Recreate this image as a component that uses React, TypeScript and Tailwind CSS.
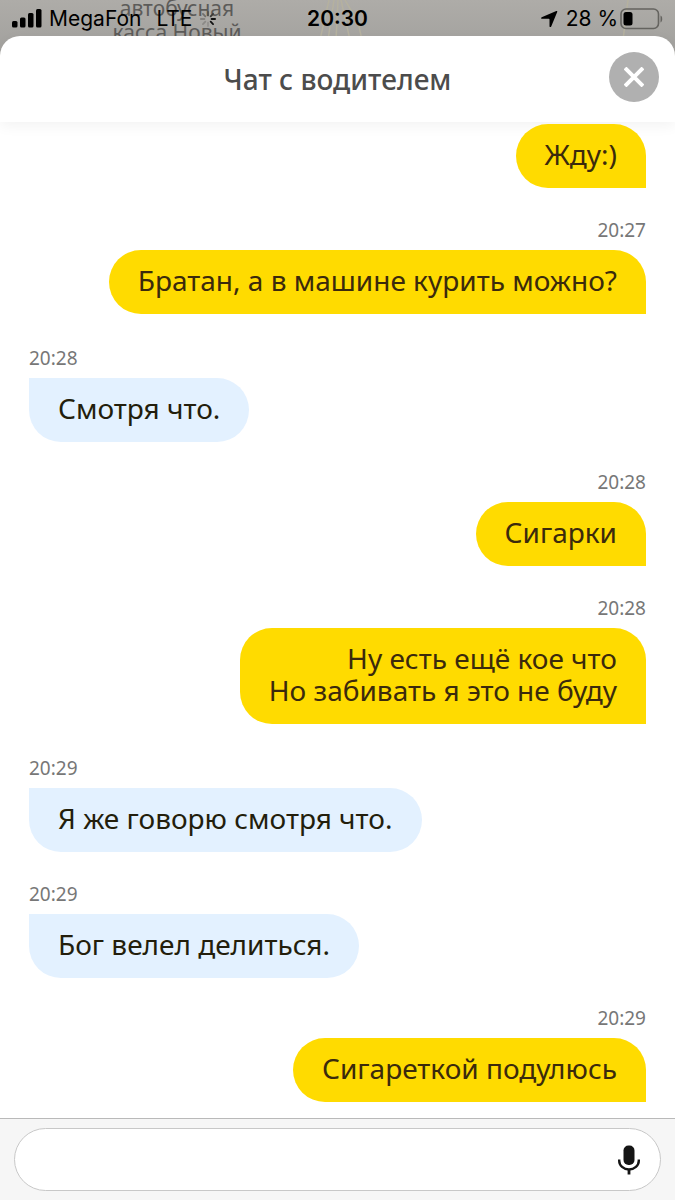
import React from "react";

type Message = { id: number; from: "me" | "driver"; time?: string; lines: string[] };

const messages: Message[] = [
  { id: 1, from: "me", lines: ["Жду:)"] },
  { id: 2, from: "me", time: "20:27", lines: ["Братан, а в машине курить можно?"] },
  { id: 3, from: "driver", time: "20:28", lines: ["Смотря что."] },
  { id: 4, from: "me", time: "20:28", lines: ["Сигарки"] },
  { id: 5, from: "me", time: "20:28", lines: ["Ну есть ещё кое что", "Но забивать я это не буду"] },
  { id: 6, from: "driver", time: "20:29", lines: ["Я же говорю смотря что."] },
  { id: 7, from: "driver", time: "20:29", lines: ["Бог велел делиться."] },
  { id: 8, from: "me", time: "20:29", lines: ["Сигареткой подулюсь"] },
];

function MapBackdrop() {
  return (
    <div aria-hidden="true" className="absolute inset-0 overflow-hidden bg-linear-to-b from-[#aeaca8] to-[#9f9e9b]">
      <svg className="absolute left-[316px] top-0 h-10 w-12" viewBox="0 0 48 40" fill="none" stroke="#b5b19f" strokeWidth="1.500">
        <path d="M13 0 4 40M18 0 12 40M22 0 20 40M29 0 42 22 46 40M25 0 34 40" />
      </svg>
      <svg className="absolute right-[44px] top-0 h-10 w-3" viewBox="0 0 12 40" fill="none" stroke="#b5b19f" strokeWidth="1.500">
        <path d="M9 0 4 40" />
      </svg>
      <p className="absolute left-[102px] -top-1 w-[150px] text-center text-[21px] leading-6 text-[#5c5b59]">
        автобусная
        <br />
        касса Новый
      </p>
    </div>
  );
}

function StatusBar() {
  return (
    <div className="relative grid h-9 grid-cols-[1fr_auto_1fr] items-center px-3 pt-0.5 font-['Inter','Liberation_Sans',sans-serif] text-[21px] leading-6 text-black">
      <div className="flex items-center gap-[7px]">
        <svg className="h-5 w-[30px]" viewBox="0 0 30 20" fill="currentColor">
          <rect x="0" y="12" width="5.500" height="6.500" rx="1.500" />
          <rect x="8" y="8.500" width="5.500" height="10" rx="1.500" />
          <rect x="16" y="4" width="5.500" height="14.500" rx="1.500" />
          <rect x="24" y="0" width="5.500" height="18.500" rx="1.500" />
        </svg>
        <span>MegaFon</span>
        <span className="pl-2">LTE</span>
        <svg className="h-4 w-4" viewBox="0 0 18 18" fill="none" strokeWidth="2" strokeLinecap="round">
          <path d="M9 1v4" stroke="#55534f" />
          <path d="M14.700 3.300 12 6" stroke="#3a3937" />
          <path d="M17 9h-4" stroke="#111" />
          <path d="M14.700 14.700 12 12" stroke="#111" />
          <path d="M9 17v-4" stroke="#92908d" />
          <path d="M3.300 14.700 6 12" stroke="#8b8986" />
          <path d="M1 9h4" stroke="#83817e" />
          <path d="M3.300 3.300 6 6" stroke="#706e6b" />
        </svg>
      </div>
      <span className="font-semibold">20:30</span>
      <div className="flex items-center justify-end">
        <svg className="mr-2 h-[18px] w-[18px]" viewBox="0 0 18 18" fill="currentColor">
          <path d="M16.300 1.100c.7-.3 1.200.2.900.900L11.200 16.500c-.4.900-1.700.7-1.700-.3V9.500c0-.5-.2-.7-.7-.7H2C1 8.800.8 7.600 1.700 7.200z" />
        </svg>
        <span className="mr-0.5">28 %</span>
        <svg className="h-[22px] w-[43px]" viewBox="0 0 43 22" fill="none">
          <rect x="1" y="1" width="37.500" height="19.500" rx="5" stroke="#64635f" strokeWidth="1.600" />
          <rect x="3.500" y="4" width="9" height="13.500" rx="2.500" fill="#000" />
          <path d="M40.500 7.500c2.300.8 2.300 6 0 7z" fill="#64635f" />
        </svg>
      </div>
    </div>
  );
}

function Bubble({ message }: { message: Message }) {
  const mine = message.from === "me";
  return (
    <li className={mine ? "flex flex-col items-end gap-2 pb-[30px]" : "flex flex-col items-start gap-2 pb-7 pt-0.5"}>
      {message.time && <time className="text-[19px] leading-6 text-[#777]">{message.time}</time>}
      <p
        className={
          mine
            ? "rounded-[32px] rounded-br-none bg-[#ffdb00] px-[29px] pb-[18px] pt-[14px] text-right text-[28px] leading-8 text-[#3b2a0c]"
            : "rounded-[32px] rounded-tl-none bg-[#e3f1ff] px-[29px] pb-[18px] pt-[14px] text-[28px] leading-8 text-[#231e0c]"
        }
      >
        {message.lines.map((line) => (
          <span key={line} className="block">
            {line}
          </span>
        ))}
      </p>
    </li>
  );
}

export default function App() {
  return (
    <div className="relative flex min-h-screen flex-col font-['Noto_Sans',sans-serif]">
      <div className="absolute inset-x-0 top-0 h-16">
        <MapBackdrop />
      </div>
      <StatusBar />
      <main className="relative flex flex-1 flex-col rounded-t-[20px] bg-white">
        <header className="grid h-[86px] grid-cols-[1fr_auto_1fr] items-center rounded-t-[20px] px-4 shadow-[0_4px_14px_rgba(0,0,0,0.05)]">
          <h1 className="col-start-2 text-[28px] font-medium leading-9 text-[#4c4c4c]">Чат с водителем</h1>
          <button
            type="button"
            aria-label="Закрыть"
            className="mb-1 flex size-[50px] items-center justify-center justify-self-end rounded-full bg-[#b0b0b0] text-white"
          >
            <svg className="size-5" viewBox="0 0 20 20" fill="none" stroke="currentColor" strokeWidth="4">
              <path d="M1 1 19 19M19 1 1 19" />
            </svg>
          </button>
        </header>
        <ul className="relative flex flex-1 flex-col px-[29px] pt-0.5">
          {messages.map((message) => (
            <Bubble key={message.id} message={message} />
          ))}
        </ul>
        <form className="-mt-[14px] border-t border-[#b9b9b9] bg-[#f6f6f6] px-[14px] pb-[9px] pt-[9px]">
          <div className="flex h-[63px] items-center rounded-full border border-[#c8c8c8] bg-white pl-7 pr-5">
            <input
              type="text"
              aria-label="Сообщение"
              className="min-w-0 flex-1 bg-transparent text-[28px] leading-8 text-[#231e0c] outline-none"
            />
            <button type="button" aria-label="Голосовой ввод" className="text-[#151515]">
              <svg className="h-[30px] w-[22px]" viewBox="0 0 22 30" fill="none">
                <rect x="5.500" y="0.500" width="11" height="19.500" rx="5" fill="currentColor" />
                <path d="M1.200 14.500v1.200a9.800 8.800 0 0 0 19.600 0v-1.200" stroke="currentColor" strokeWidth="2.400" />
                <path d="M11 24v5.500" stroke="currentColor" strokeWidth="2.800" />
              </svg>
            </button>
          </div>
        </form>
      </main>
    </div>
  );
}
